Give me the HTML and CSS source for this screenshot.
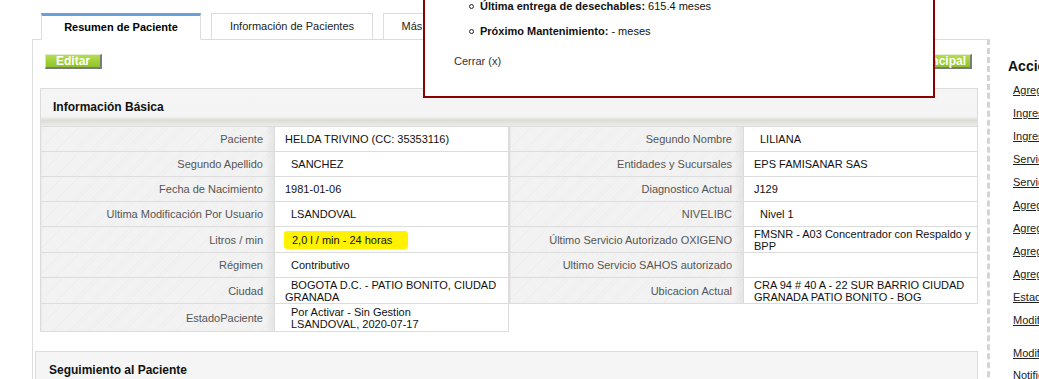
FILE: index.html
```html
<!DOCTYPE html>
<html lang="es">
<head>
    <meta charset="UTF-8">
    <meta name="viewport" content="width=device-width, initial-scale=1.0">
    <title>Resumen de Paciente</title>
    <link rel="stylesheet" href="styles.css">
</head>
<body>
    <div class="page">
        <div class="main">
            <div class="tabs">
                <div class="tab active">Resumen de Paciente</div>
                <div class="tab">Información de Pacientes</div>
                <div class="tab wide">Más Información del Paciente</div>
            </div>
            <div class="panel">
                <div class="toolbar">
                    <a class="btn btn-edit">Editar</a>
                    <a class="btn btn-home">Volver a Página Principal</a>
                </div>

                <div class="box">
                    <div class="box-head">Información Básica</div>
                    <div class="grid">
                        <table class="info">
                            <colgroup><col class="c-lbl"><col></colgroup>
                            <tr><td class="lbl">Paciente</td><td class="val">HELDA TRIVINO (CC: 35353116)</td></tr>
                            <tr><td class="lbl">Segundo Apellido</td><td class="val ind">SANCHEZ</td></tr>
                            <tr><td class="lbl">Fecha de Nacimiento</td><td class="val">1981-01-06</td></tr>
                            <tr><td class="lbl">Ultima Modificación Por Usuario</td><td class="val ind">LSANDOVAL</td></tr>
                            <tr class="r26"><td class="lbl">Litros / min</td><td class="val ind"><span class="mark">2,0 l / min - 24 horas</span></td></tr>
                            <tr><td class="lbl">Régimen</td><td class="val ind">Contributivo</td></tr>
                            <tr class="r26"><td class="lbl">Ciudad</td><td class="val ind">BOGOTA D.C. - PATIO BONITO, CIUDAD GRANADA</td></tr>
                            <tr class="r28"><td class="lbl">EstadoPaciente</td><td class="val pad">Por Activar - Sin Gestion<br>LSANDOVAL, 2020-07-17</td></tr>
                        </table>
                        <table class="info">
                            <colgroup><col class="c-lbl"><col></colgroup>
                            <tr><td class="lbl">Segundo Nombre</td><td class="val ind">LILIANA</td></tr>
                            <tr><td class="lbl">Entidades y Sucursales</td><td class="val">EPS FAMISANAR SAS</td></tr>
                            <tr><td class="lbl">Diagnostico Actual</td><td class="val">J129</td></tr>
                            <tr><td class="lbl">NIVELIBC</td><td class="val ind">Nivel 1</td></tr>
                            <tr class="r26"><td class="lbl">Último Servicio Autorizado OXIGENO</td><td class="val">FMSNR - A03 Concentrador con Respaldo y BPP</td></tr>
                            <tr><td class="lbl">Ultimo Servicio SAHOS autorizado</td><td class="val"></td></tr>
                            <tr class="r26"><td class="lbl">Ubicacion Actual</td><td class="val">CRA 94 # 40 A - 22 SUR BARRIO CIUDAD GRANADA PATIO BONITO - BOG</td></tr>
                        </table>
                    </div>
                </div>

                <div class="box follow">
                    <div class="box-head">Seguimiento al Paciente</div>
                </div>
            </div>
        </div>

        <div class="sidebar">
            <h3>Acciones</h3>
            <a href="#">Agregar Seguimiento</a>
            <a href="#">Ingresar Servicio</a>
            <a href="#">Ingresar Orden Médica</a>
            <a href="#">Servicios Autorizados</a>
            <a href="#">Servicios Programados</a>
            <a href="#">Agregar Documento</a>
            <a href="#">Agregar Equipo</a>
            <a href="#">Agregar Nota</a>
            <a href="#">Agregar Visita</a>
            <a href="#">Estado del Paciente</a>
            <a href="#">Modificar Datos</a>
            <a href="#" class="gap">Modificar Dirección</a>
            <a href="#" class="plain">Notificaciones</a>
        </div>

        <div class="popup">
            <ul>
                <li><b>Última entrega de desechables:</b> 615.4 meses</li>
                <li><b>Próximo Mantenimiento:</b> - meses</li>
            </ul>
            <a class="close">Cerrar (x)</a>
        </div>
    </div>
</body>
</html>
```

FILE: styles.css
```css
html, body {
    overflow: hidden;
}
body {
    margin: 0;
    font-family: "Liberation Sans", Arial, sans-serif;
    font-size: 11px;
    color: #111;
    background: #fff;
}
.page {
    position: relative;
    display: flex;
    width: 1300px;
}
.main {
    flex: none;
    width: 958px;
    margin-left: 32px;
    padding-top: 13px;
}
.tabs {
    display: flex;
    gap: 10px;
    padding-left: 9px;
    margin-bottom: -1px;
    position: relative;
    z-index: 1;
}
.tab {
    box-sizing: border-box;
    width: 162px;
    height: 27px;
    border: 1px solid #dcdcdc;
    background: #fff;
    text-align: center;
    line-height: 25px;
    color: #222;
}
.tab.wide {
    width: 182px;
}
.tab.active {
    width: 160px;
    border-top: 3px solid #6a9fdc;
    border-bottom-color: #fff;
    line-height: 23px;
    font-weight: bold;
    color: #000;
}
.panel {
    height: 400px;
    border-top: 1px solid #dcdcdc;
    border-left: 1px solid #dcdcdc;
    border-right: 3px dashed #d4d4d4;
}
.toolbar {
    display: flex;
    justify-content: space-between;
    padding: 14px 15px 0 12px;
}
.btn {
    display: block;
    box-sizing: border-box;
    height: 15px;
    padding: 0 7px;
    font-size: 12px;
    font-weight: bold;
    line-height: 13px;
    color: #fff;
    background: linear-gradient(#b5de4e, #8ec32a);
    border: 1px solid;
    border-color: #e4efcc #7a7a7a #7a7a7a #d6e6b8;
    border-width: 1px 2px 2px 1px;
}
.btn-edit {
    width: 57px;
    text-align: center;
}
.btn-home {
    padding-right: 4px;
}
.box {
    margin: 19px 9px 0 7px;
}
.box-head {
    height: 38px;
    padding-left: 12px;
    line-height: 36px;
    font-size: 12px;
    font-weight: bold;
    color: #111;
    border: 1px solid #dcdcdc;
    border-bottom: none;
    background: linear-gradient(#f5f5f5 0, #f4f4f4 74%, #dcdcd7 84%, #ececec 100%);
    box-sizing: border-box;
}
.grid {
    display: flex;
    align-items: flex-start;
}
.info {
    width: 50%;
    border-collapse: collapse;
    table-layout: fixed;
}
.info col.c-lbl {
    width: 50%;
}
.info tr {
    height: 25px;
}
.info tr.r26 {
    height: 26px;
}
.info tr.r28 {
    height: 28px;
}
.info td {
    box-sizing: border-box;
    border: 1px solid #dcdcdc;
    padding: 0 10px;
    line-height: 12px;
    vertical-align: middle;
}
.lbl {
    text-align: right;
    padding-right: 11px !important;
    color: #555;
    background:
        linear-gradient(to right, rgba(0, 0, 0, 0) calc(100% - 9px), rgba(0, 0, 0, 0.06) 100%),
        repeating-linear-gradient(135deg, #f3f3f3 0 2px, #eeeeee 2px 3px);
}
.val {
    color: #111;
    background: #fff;
    padding-right: 4px !important;
}
.ind {
    text-indent: 6px;
}
.pad {
    padding-left: 16px !important;
}
.mark {
    display: inline-block;
    text-indent: 0;
    margin-left: -7px;
    padding: 3px 16px 3px 8px;
    background: #fff200;
    border-radius: 3px;
}
.follow {
    margin: 19px 9px 0 2px;
}
.follow .box-head {
    border-bottom: 1px solid #dcdcdc;
    padding-left: 13px;
    height: 60px;
    line-height: 36px;
    background: #f5f5f5;
}
.sidebar {
    flex: none;
    width: 240px;
    padding: 58px 0 0 18px;
    white-space: nowrap;
}
.sidebar h3 {
    margin: 0;
    font-size: 14px;
    line-height: 16px;
    color: #111;
}
.sidebar a {
    display: block;
    margin: 10px 0 0 5px;
    line-height: 13px;
    color: #222;
    text-decoration: underline;
}
.sidebar a.gap {
    margin-top: 20px;
}
.sidebar a.plain {
    margin-top: 9px;
}
.popup {
    position: absolute;
    left: 423px;
    top: -20px;
    width: 508px;
    padding: 17px 0 28px 0;
    border: 2px solid #8b0000;
    background: #fff;
    z-index: 5;
}
.popup ul {
    list-style: none;
    margin: 0;
    padding: 0;
}
.popup li {
    position: relative;
    padding-left: 55px;
    line-height: 14px;
    color: #111;
}
.popup li + li {
    margin-top: 11px;
}
.popup li::before {
    content: "";
    position: absolute;
    left: 44px;
    top: 5px;
    width: 3px;
    height: 3px;
    border: 1px solid #222;
    border-radius: 50%;
}
.close {
    display: block;
    margin-top: 16px;
    padding-left: 29px;
    line-height: 14px;
    color: #333;
}
```
